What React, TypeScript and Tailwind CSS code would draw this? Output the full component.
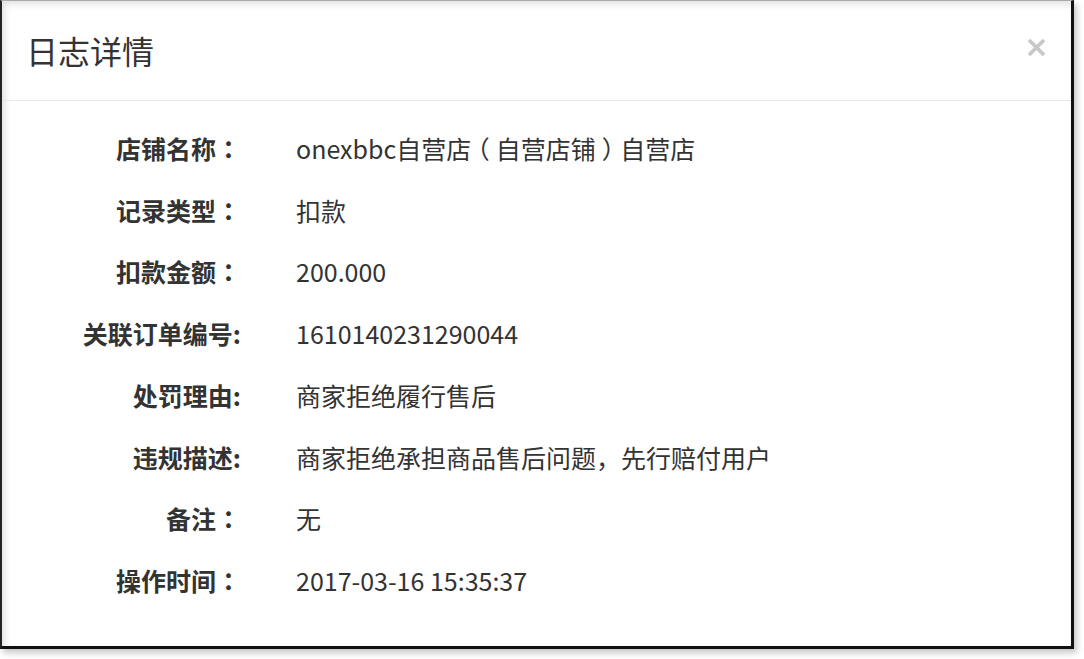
import React from "react";

const TC = '"Noto Sans CJK TC", sans-serif';

const renderText = (s: string) =>
  s.split(/([：（）])/).map((part, i) =>
    part === "：" ? (
      <span key={i} style={{ fontFamily: TC }}>{part}</span>
    ) : part === "（" || part === "）" ? (
      <span key={i} className="inline-block px-[6px] [font-feature-settings:'halt']">{part}</span>
    ) : (
      <React.Fragment key={i}>{part}</React.Fragment>
    )
  );

const rows: [string, string][] = [
  ["店铺名称：", "onexbbc自营店（自营店铺）自营店"],
  ["记录类型：", "扣款"],
  ["扣款金额：", "200.000"],
  ["关联订单编号:", "1610140231290044"],
  ["处罚理由:", "商家拒绝履行售后"],
  ["违规描述:", "商家拒绝承担商品售后问题，先行赔付用户"],
  ["备注：", "无"],
  ["操作时间：", "2017-03-16 15:35:37"],
];

export default function App() {
  return (
    <div
      className="w-[1084px] h-[659px] bg-white overflow-hidden"
      style={{ fontFamily: '"Noto Sans CJK SC", "Noto Sans", sans-serif' }}
    >
      <div className="w-[1074px] h-[649px] bg-white border-l-2 border-t border-r-[3px] border-b-[3px] border-l-[#222] border-t-[#aaa] border-r-[#111] border-b-[#111] shadow-[inset_3px_3px_7px_rgba(0,0,0,0.12),3px_4px_6px_rgba(0,0,0,0.22)] flex flex-col">
        <div className="h-[100px] border-b border-[#e9e9e9] flex items-center justify-between pl-[24px] pr-[25px] shrink-0">
          <h1 className="text-[32px] text-[#333] leading-none font-normal -mt-[2px]">日志详情</h1>
          <svg width="19" height="19" viewBox="0 0 19 19" className="-mt-[7px]">
            <path d="M2 2 L17 17 M17 2 L2 17" stroke="#c8c8c8" strokeWidth="3.8" strokeLinecap="butt" />
          </svg>
        </div>
        <div className="pt-[17px] flex flex-col">
          {rows.map(([label, value]) => (
            <div key={label} className="h-[61.7px] flex items-center text-[25px] text-[#333]">
              <div className="w-[239px] text-right font-bold shrink-0">{renderText(label)}</div>
              <div className="pl-[55px] whitespace-nowrap">{renderText(value)}</div>
            </div>
          ))}
        </div>
      </div>
    </div>
  );
}
